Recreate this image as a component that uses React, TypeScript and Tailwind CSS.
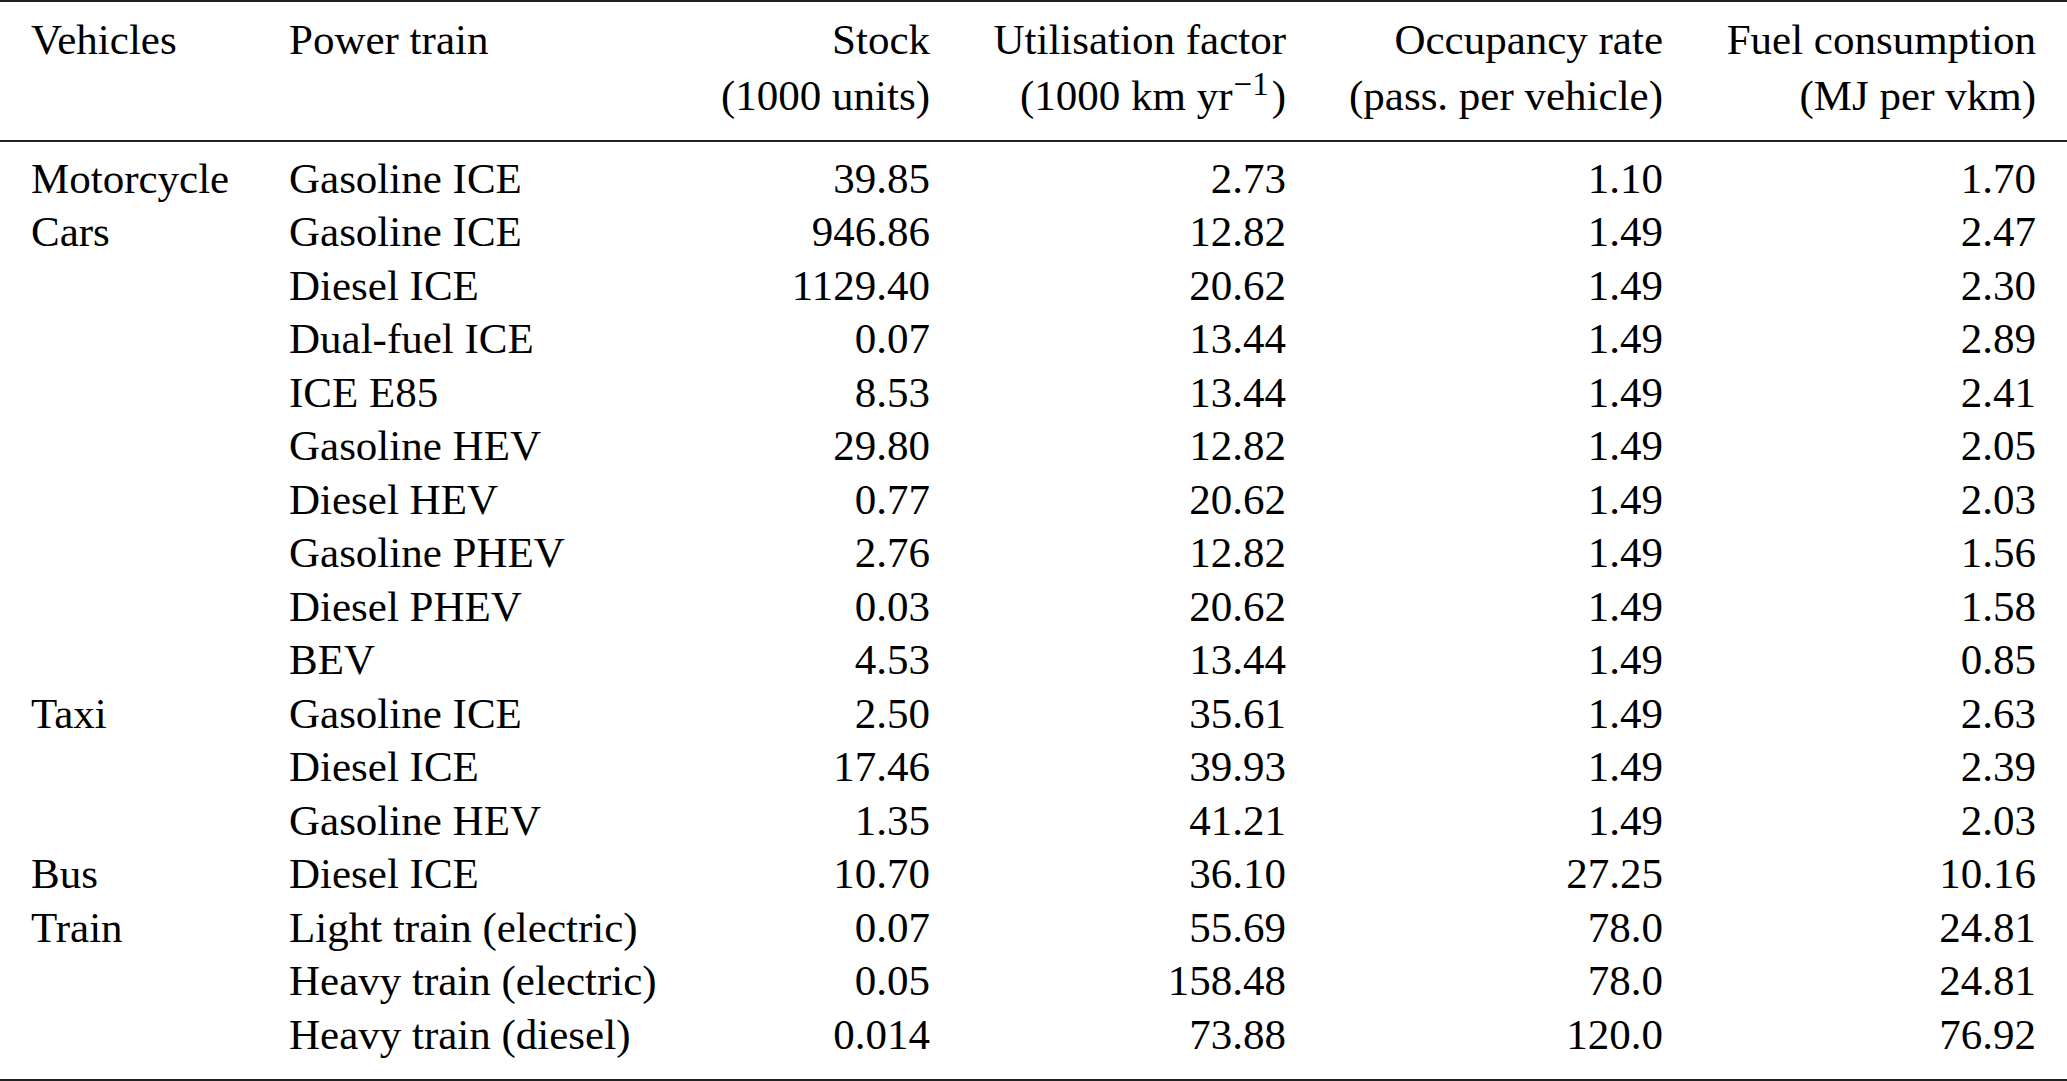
import React from "react";

const rows: [string, string, string, string, string, string][] = [
  ["Motorcycle", "Gasoline ICE", "39.85", "2.73", "1.10", "1.70"],
  ["Cars", "Gasoline ICE", "946.86", "12.82", "1.49", "2.47"],
  ["", "Diesel ICE", "1129.40", "20.62", "1.49", "2.30"],
  ["", "Dual-fuel ICE", "0.07", "13.44", "1.49", "2.89"],
  ["", "ICE E85", "8.53", "13.44", "1.49", "2.41"],
  ["", "Gasoline HEV", "29.80", "12.82", "1.49", "2.05"],
  ["", "Diesel HEV", "0.77", "20.62", "1.49", "2.03"],
  ["", "Gasoline PHEV", "2.76", "12.82", "1.49", "1.56"],
  ["", "Diesel PHEV", "0.03", "20.62", "1.49", "1.58"],
  ["", "BEV", "4.53", "13.44", "1.49", "0.85"],
  ["Taxi", "Gasoline ICE", "2.50", "35.61", "1.49", "2.63"],
  ["", "Diesel ICE", "17.46", "39.93", "1.49", "2.39"],
  ["", "Gasoline HEV", "1.35", "41.21", "1.49", "2.03"],
  ["Bus", "Diesel ICE", "10.70", "36.10", "27.25", "10.16"],
  ["Train", "Light train (electric)", "0.07", "55.69", "78.0", "24.81"],
  ["", "Heavy train (electric)", "0.05", "158.48", "78.0", "24.81"],
  ["", "Heavy train (diesel)", "0.014", "73.88", "120.0", "76.92"],
];

// column right edges follow the reference: 930 / 1286 / 1663 / 2036
const cols =
  "grid grid-cols-[258px_411px_230px_356px_377px_373px] pl-[31px] whitespace-nowrap";

export default function App() {
  return (
    <div className="w-[2067px] h-[1081px] overflow-hidden bg-white text-black font-['Liberation_Serif',serif] text-[43px]">
      <div className="h-[2px] bg-[#222]" />

      {/* header */}
      <div className={`${cols} pt-[9.5px] pb-[15.5px] leading-[56.5px]`}>
        <div>Vehicles</div>
        <div>Power train</div>
        <div className="text-right">
          <div>Stock</div>
          <div>(1000 units)</div>
        </div>
        <div className="text-right">
          <div>Utilisation factor</div>
          <div>
            (1000 km yr
            <span className="ml-[1px] mr-[3px] text-[33px] leading-[0] align-[15px]">
              {"\u22121"}
            </span>
            )
          </div>
        </div>
        <div className="text-right">
          <div>Occupancy rate</div>
          <div>(pass. per vehicle)</div>
        </div>
        <div className="text-right">
          <div>Fuel consumption</div>
          <div>(MJ per vkm)</div>
        </div>
      </div>

      <div className="h-[1.5px] bg-[#222]" />

      {/* body */}
      <div className="pt-[10px] pb-[17.5px] leading-[53.5px]">
        {rows.map((r, i) => (
          <div key={i} className={cols}>
            <div>{r[0]}</div>
            <div>{r[1]}</div>
            <div className="text-right">{r[2]}</div>
            <div className="text-right">{r[3]}</div>
            <div className="text-right">{r[4]}</div>
            <div className="text-right">{r[5]}</div>
          </div>
        ))}
      </div>

      <div className="h-[2px] bg-[#222]" />
    </div>
  );
}
